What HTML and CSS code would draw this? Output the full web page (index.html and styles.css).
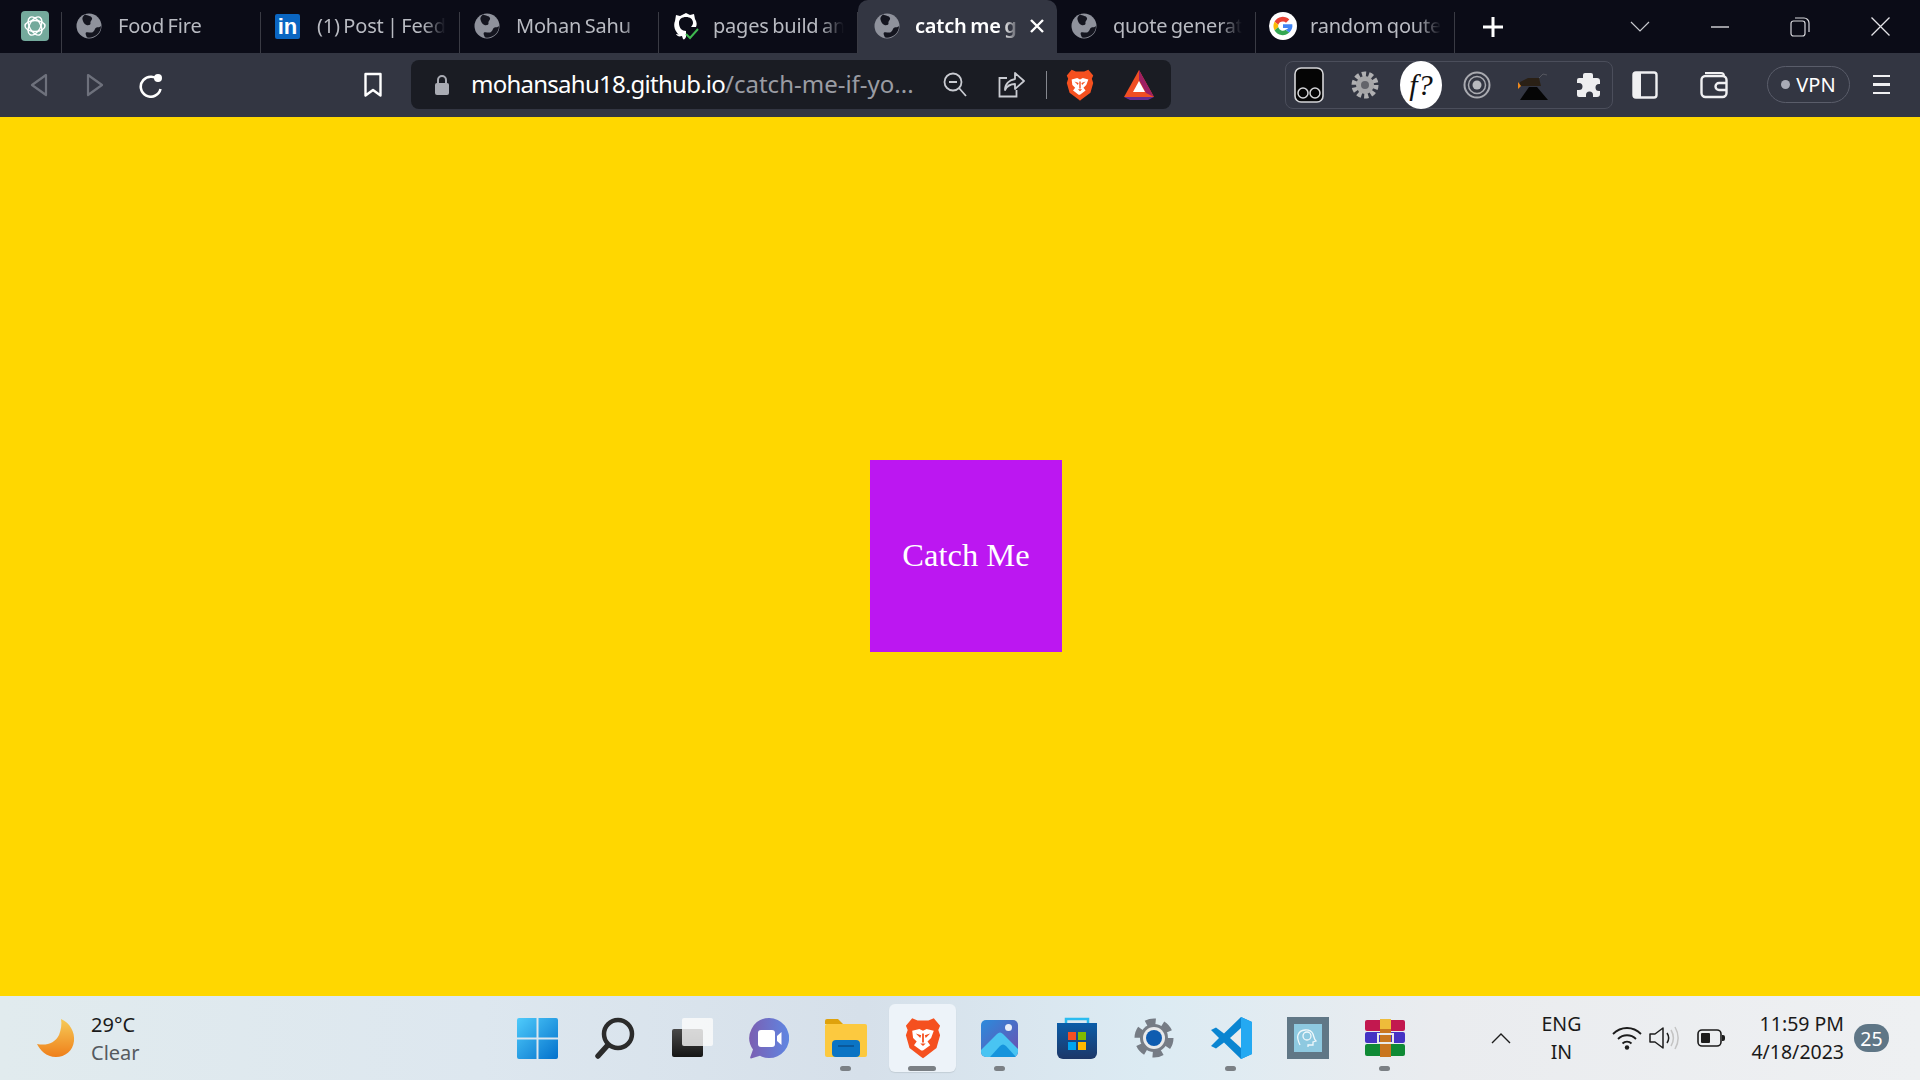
FILE: index.html
```html
<!DOCTYPE html>
<html lang="en">
<head>
    <meta charset="UTF-8" />
    <title>catch me</title>
    <link rel="stylesheet" href="styles.css">
</head>
<body>
    <svg class="sprites" width="0" height="0">
        <symbol id="globe" viewBox="0 0 26 26">
            <circle cx="13" cy="13" r="12.500" fill="#8f929c"/>
            <path d="M9 1.500C12 3 15 2.500 16 5c.6 2-2 3-1.500 5 .4 2-2 2.500-4 2-2-.6-3.500-3-4-5.500C6 5 7 3 9 1.500zM25 13c-1 1.500-3 1-4.500 1.500-2 .8-1.500 3-3.500 4.500-2 1.500-5-.5-7 .5-1 .6 0 3 1 5 7 1 14-4 14-11.500z" fill="#14151f"/>
        </symbol>
        <symbol id="google" viewBox="0 0 28 28">
            <circle cx="14" cy="14" r="14" fill="#fff"/>
            <path d="M14 9.500a4.500 4.500 0 0 1 3 1.200l3.300-3.300A9.500 9.500 0 0 0 5.500 9.700l3.800 3a4.800 4.800 0 0 1 4.700-3.200z" fill="#ea4335"/>
            <path d="M9.300 12.700l-3.800-3a9.500 9.500 0 0 0 0 8.600l3.800-3a4.800 4.800 0 0 1 0-2.600z" fill="#fbbc05"/>
            <path d="M9.300 15.300l-3.800 3a9.500 9.500 0 0 0 14.800 2.300l-3.600-2.800a4.800 4.800 0 0 1-7.400-2.500z" fill="#34a853"/>
            <path d="M23.300 12.300H14v3.800h5.300a4.500 4.500 0 0 1-2.600 1.700l3.600 2.800c2.300-2.100 3.600-5 3-8.300z" fill="#4285f4"/>
        </symbol>
        <symbol id="brave" viewBox="0 0 40 46">
            <path d="M8 1l6 2.500h12L32 1l7 8.500-2 4.500 2 6-4 14-13 10-2 1.500-2-1.500L5 34 1 20l2-6-2-4.500z" fill="#f5501f"/>
            <path d="M8 15l8-2 4 2 4-2 8 2-3 8-4 4 3 4-8 6h-2l-8-6 3-4-4-4z" fill="#fff"/>
            <path d="M12 18l6 2-1 3zM28 18l-6 2 1 3zM17 29h6l-3 3zM19 18h2v10h-2z" fill="#f5501f"/>
        </symbol>
        <symbol id="cog" viewBox="0 0 42 42">
            <circle cx="21" cy="21" r="15" fill="none" stroke="#767c85" stroke-width="9" stroke-dasharray="9 6.700"/>
            <circle cx="21" cy="21" r="14" fill="#767c85"/>
        </symbol>
    </svg>

    <!-- Browser tabs -->
    <div class="tabbar">
        <div class="pinned">
            <svg width="28" height="30" viewBox="0 0 28 30">
                <rect width="28" height="30" rx="4" fill="#74aa9c"/>
                <g fill="none" stroke="#fff" stroke-width="1.400">
                    <ellipse cx="14" cy="15" rx="10" ry="5.500"/>
                    <ellipse cx="14" cy="15" rx="10" ry="5.500" transform="rotate(60 14 15)"/>
                    <ellipse cx="14" cy="15" rx="10" ry="5.500" transform="rotate(120 14 15)"/>
                </g>
            </svg>
        </div>
        <div class="tab">
            <svg class="favicon" width="26" height="26"><use href="#globe"/></svg>
            <span class="title">Food Fire</span>
        </div>
        <div class="tab">
            <svg class="favicon" width="26" height="26" viewBox="0 0 26 26">
                <rect width="25" height="25" y="1" rx="2" fill="#0a66c2"/>
                <text x="12.500" y="21" text-anchor="middle" class="linkedin-text">in</text>
            </svg>
            <span class="title">(1) Post | Feed</span>
        </div>
        <div class="tab">
            <svg class="favicon" width="26" height="26"><use href="#globe"/></svg>
            <span class="title">Mohan Sahu</span>
        </div>
        <div class="tab">
            <svg class="favicon wide" width="28" height="28" viewBox="0 0 28 28">
                <path d="M14 1l4 2 4-1 1 5c2 3 2 6 1 8h-5c1-1 2-3 2-4 0-4-3-6-7-6s-7 2-7 6c0 5 3 8 7 8v6c-1 2-2 3-3 2l-1-3c-3 1-5 0-6-2 1 0 2 0 3 1-4-4-6-9-4-14l1-6 4 1z" fill="#fff"/>
                <path d="M14 22l4 4 8-9" fill="none" stroke="#3fb950" stroke-width="2"/>
            </svg>
            <span class="title">pages build an</span>
        </div>
        <div class="tab active">
            <svg class="favicon" width="26" height="26"><use href="#globe"/></svg>
            <span class="title">catch me g</span>
            <svg class="tab-close" width="14" height="14" viewBox="0 0 14 14">
                <path d="M1 1l12 12M13 1L1 13" stroke="#fff" stroke-width="2.400"/>
            </svg>
        </div>
        <div class="tab">
            <svg class="favicon" width="26" height="26"><use href="#globe"/></svg>
            <span class="title">quote generat</span>
        </div>
        <div class="tab">
            <svg class="favicon wide" width="28" height="28"><use href="#google"/></svg>
            <span class="title">random qoute</span>
        </div>
        <div class="new-tab">
            <svg width="22" height="22" viewBox="0 0 22 22">
                <path d="M11 1v20M1 11h20" stroke="#fff" stroke-width="3"/>
            </svg>
        </div>
        <div class="window-controls">
            <div class="win-btn">
                <svg width="20" height="12" viewBox="0 0 20 12"><path d="M1 1l9 9 9-9" fill="none" stroke="#c8c9cf" stroke-width="1.200"/></svg>
            </div>
            <div class="win-btn">
                <svg width="18" height="2" viewBox="0 0 18 2"><path d="M0 1h18" stroke="#d8d8dc" stroke-width="1.400"/></svg>
            </div>
            <div class="win-btn">
                <svg width="20" height="20" viewBox="0 0 20 20"><rect x="1" y="4" width="14" height="15" rx="2.500" fill="none" stroke="#d8d8dc" stroke-width="1.200"/><path d="M5 1h9a5 5 0 0 1 5 5v9" fill="none" stroke="#d8d8dc" stroke-width="1.200"/></svg>
            </div>
            <div class="win-btn">
                <svg width="19" height="19" viewBox="0 0 19 19"><path d="M.5.500l18 18M18.500.500l-18 18" stroke="#e4e4e8" stroke-width="1.300"/></svg>
            </div>
        </div>
    </div>

    <!-- Browser toolbar -->
    <div class="toolbar">
        <div class="tool-btn">
            <svg width="18" height="24" viewBox="0 0 18 24"><path d="M16 2L2 12l14 10z" fill="none" stroke="#6e717c" stroke-width="2.200" stroke-linejoin="round"/></svg>
        </div>
        <div class="tool-btn">
            <svg width="18" height="24" viewBox="0 0 18 24"><path d="M2 2l14 10L2 22z" fill="none" stroke="#6e717c" stroke-width="2.200" stroke-linejoin="round"/></svg>
        </div>
        <div class="tool-btn">
            <svg width="26" height="26" viewBox="0 0 26 26">
                <path d="M21 9a10 10 0 1 0 1.500 8" fill="none" stroke="#fff" stroke-width="2.600"/>
                <circle cx="20" cy="6" r="4" fill="#fff"/>
            </svg>
        </div>
        <div class="tool-btn bookmark">
            <svg width="20" height="26" viewBox="0 0 20 26"><path d="M2.500 2h15v21.500L10 18l-7.500 5.500z" fill="none" stroke="#fff" stroke-width="2.400" stroke-linejoin="round"/></svg>
        </div>

        <div class="address-bar">
            <svg class="lock" width="16" height="20" viewBox="0 0 16 20">
                <rect x="1" y="8" width="14" height="12" rx="2" fill="#a9abb3"/>
                <path d="M4 8V5a4 4 0 0 1 8 0v3" fill="none" stroke="#a9abb3" stroke-width="2"/>
            </svg>
            <span class="url"><span class="url-host">mohansahu18.github.io</span>/catch-me-if-yo...</span>
            <svg class="bar-icon zoom-out" width="24" height="26" viewBox="0 0 24 26">
                <circle cx="10" cy="10" r="8.500" fill="none" stroke="#c9cbd1" stroke-width="1.800"/>
                <path d="M6 10h8M16 16l7 8" stroke="#c9cbd1" stroke-width="1.800"/>
            </svg>
            <svg class="bar-icon share" width="27" height="26" viewBox="0 0 27 26">
                <path d="M9 6H1.500v18.500h17V18" fill="none" stroke="#c9cbd1" stroke-width="1.800"/>
                <path d="M17 1l9 8-9 8v-5c-5 0-8 2-10 6 0-6 4-10 10-11z" fill="none" stroke="#c9cbd1" stroke-width="1.800" stroke-linejoin="round"/>
            </svg>
            <div class="bar-sep"></div>
            <svg class="bar-icon lion" width="28" height="32"><use href="#brave"/></svg>
            <svg class="bar-icon bat" width="32" height="32" viewBox="0 0 32 32">
                <path d="M16 1L1 28h30z" fill="#f04e23"/>
                <path d="M16 1l15 27-8-4-7-13z" fill="#9e1f63"/>
                <path d="M1 28h30l-6 3H7z" fill="#662d91"/>
                <path d="M16 12l6 11H10z" fill="#fff"/>
            </svg>
        </div>

        <div class="extensions">
            <div class="ext">
                <svg width="30" height="36" viewBox="0 0 30 36">
                    <rect x="1" y="1" width="28" height="34" rx="6" fill="#050505" stroke="#d5d5d8" stroke-width="1.600"/>
                    <circle cx="9" cy="26" r="5" fill="none" stroke="#d5d5d8" stroke-width="1.500"/>
                    <circle cx="21" cy="26" r="5" fill="none" stroke="#d5d5d8" stroke-width="1.500"/>
                </svg>
            </div>
            <div class="ext">
                <svg width="28" height="28" viewBox="0 0 28 28">
                    <circle cx="14" cy="14" r="10.500" fill="none" stroke="#b0b0b2" stroke-width="6" stroke-dasharray="4 2.600"/>
                    <circle cx="14" cy="14" r="9" fill="#a6a6a8"/>
                    <circle cx="14" cy="14" r="4" fill="#63646a"/>
                </svg>
            </div>
            <div class="ext">
                <div class="fquestion">f?</div>
            </div>
            <div class="ext">
                <svg width="28" height="30" viewBox="0 0 28 30">
                    <circle cx="14" cy="15" r="12.500" fill="none" stroke="#a9aab0" stroke-width="2"/>
                    <circle cx="14" cy="15" r="8.500" fill="none" stroke="#a9aab0" stroke-width="1.500"/>
                    <circle cx="14" cy="15" r="4.500" fill="#b8b9be"/>
                </svg>
            </div>
            <div class="ext">
                <svg width="32" height="30" viewBox="0 0 32 30">
                    <path d="M3 12l8-4h11l2 8H3z" fill="#2a2015"/>
                    <path d="M1 12l3 4-3 3z" fill="#f08a1c"/>
                    <path d="M3 30l9-13h8l11 13z" fill="#050505"/>
                    <path d="M22 8l4-4 4 1" fill="none" stroke="#55575f" stroke-width="1"/>
                </svg>
            </div>
            <div class="ext">
                <svg width="28" height="28" viewBox="0 0 28 28">
                    <path d="M10 2h6a2 2 0 0 1 2 2v3h4a3 3 0 0 1 3 3v3h-1a3.500 3.500 0 0 0 0 7h1v3a3 3 0 0 1-3 3h-4v-2a3.500 3.500 0 0 0-7 0v2H4a2 2 0 0 1-2-2v-5h2a3.500 3.500 0 0 0 0-7H2v-3a2 2 0 0 1 2-2h4V4a2 2 0 0 1 2-2z" fill="#eeeef0"/>
                </svg>
            </div>
        </div>

        <div class="tool-btn sidebar-btn">
            <svg width="26" height="28" viewBox="0 0 26 28">
                <rect x="1.500" y="1.500" width="23" height="25" rx="2.500" fill="none" stroke="#f0f0f2" stroke-width="2.400"/>
                <rect x="2" y="2" width="7" height="24" fill="#f0f0f2"/>
            </svg>
        </div>
        <div class="tool-btn wallet-btn">
            <svg width="28" height="28" viewBox="0 0 28 28">
                <path d="M5 2h16a3 3 0 0 1 3 3" fill="none" stroke="#f0f0f2" stroke-width="2"/>
                <rect x="1.500" y="5" width="25" height="21" rx="4" fill="none" stroke="#f0f0f2" stroke-width="2.400"/>
                <path d="M26 12h-7a3.500 3.500 0 0 0 0 7h7" fill="none" stroke="#f0f0f2" stroke-width="2.400"/>
            </svg>
        </div>
        <div class="vpn"><span class="vpn-dot"></span>VPN</div>
        <div class="menu-btn">
            <span></span><span></span><span></span>
        </div>
    </div>

    <!-- Page content -->
    <main class="page">
        <div class="catch-box">Catch Me</div>
    </main>

    <!-- Windows taskbar -->
    <footer class="taskbar">
        <div class="weather">
            <svg width="40" height="40" viewBox="0 0 40 40">
                <defs>
                    <linearGradient id="moon" x1="0" y1="0" x2="0" y2="1">
                        <stop offset="0" stop-color="#f6cb58"/>
                        <stop offset="1" stop-color="#ef7f1a"/>
                    </linearGradient>
                </defs>
                <path d="M25 1c9 4 14 13 13 22-1 10-9 16-18 16C10 39 4 32 1 26c10 2 18-1 22-9 2-5 3-11 2-16z" fill="url(#moon)"/>
            </svg>
            <div class="weather-text">
                <span class="temp">29°C</span>
                <span class="cond">Clear</span>
            </div>
        </div>

        <div class="task-icons">
            <div class="task-icon">
                <svg width="41" height="41" viewBox="0 0 41 41">
                    <defs>
                        <linearGradient id="win" x1="0" y1="0" x2="1" y2="1">
                            <stop offset="0" stop-color="#4fcbfb"/>
                            <stop offset="1" stop-color="#0371cc"/>
                        </linearGradient>
                    </defs>
                    <path d="M2 0h17.500v19.500H0V2a2 2 0 0 1 2-2zM21.500 0H39a2 2 0 0 1 2 2v17.500H21.500zM0 21.500h19.500V41H2a2 2 0 0 1-2-2zM21.500 21.500H41V39a2 2 0 0 1-2 2H21.500z" fill="url(#win)"/>
                </svg>
            </div>
            <div class="task-icon">
                <svg width="40" height="42" viewBox="0 0 40 42">
                    <circle cx="23" cy="17" r="14" fill="none" stroke="#2b2b2b" stroke-width="4.500"/>
                    <path d="M12 29L3 39" stroke="#2b2b2b" stroke-width="5.500" stroke-linecap="round"/>
                </svg>
            </div>
            <div class="task-icon">
                <svg width="42" height="40" viewBox="0 0 42 40">
                    <defs>
                        <linearGradient id="tv" x1="0" y1="0" x2="0" y2="1">
                            <stop offset="0" stop-color="#4a4a4a"/>
                            <stop offset="1" stop-color="#151515"/>
                        </linearGradient>
                    </defs>
                    <rect x="1" y="11" width="31" height="28" rx="2" fill="url(#tv)"/>
                    <rect x="11" y="0" width="31" height="28" rx="2" fill="#fbfbfb" opacity=".8"/>
                </svg>
            </div>
            <div class="task-icon">
                <svg width="40" height="41" viewBox="0 0 40 41">
                    <defs>
                        <linearGradient id="chat" x1="0" y1="0" x2="1" y2="0">
                            <stop offset="0" stop-color="#7b5fb2"/>
                            <stop offset="1" stop-color="#5f86e2"/>
                        </linearGradient>
                    </defs>
                    <path d="M20 0a20 20 0 1 1-9 37.800L2 40.500c-.8 0-1-.8-.7-1.500L4 31.500A20 20 0 0 1 20 0z" fill="url(#chat)"/>
                    <rect x="9" y="12" width="17" height="17" rx="3" fill="#fff"/>
                    <path d="M28 18l4.500-4v13L28 23z" fill="#fff"/>
                </svg>
            </div>
            <div class="task-icon running">
                <svg width="42" height="38" viewBox="0 0 42 38">
                    <path d="M0 2a2 2 0 0 1 2-2h11l5 5h-18z" fill="#dfa20c"/>
                    <rect y="5" width="42" height="33" rx="2" fill="#fcc93f"/>
                    <rect x="7" y="21" width="28" height="17" rx="4" fill="#0b74c4"/>
                    <path d="M13 27h16" stroke="#0b4f8d" stroke-width="1.500"/>
                </svg>
            </div>
            <div class="task-icon running active-app">
                <svg width="36" height="42"><use href="#brave"/></svg>
            </div>
            <div class="task-icon running">
                <svg width="37" height="37" viewBox="0 0 37 37">
                    <defs>
                        <linearGradient id="ph" x1="0" y1="0" x2="1" y2="1">
                            <stop offset="0" stop-color="#2b8bdc"/>
                            <stop offset="1" stop-color="#6c4fb0"/>
                        </linearGradient>
                    </defs>
                    <rect width="37" height="37" rx="5" fill="url(#ph)"/>
                    <circle cx="27.500" cy="7.500" r="3.500" fill="#e8eef8"/>
                    <path d="M0 30l16-16c2-2 4-2 6 0l15 15v3a5 5 0 0 1-5 5H5a5 5 0 0 1-5-5z" fill="#49c4f2"/>
                    <path d="M9 37l10-11c2-2 4-2 6 0l10 11z" fill="#1694dc"/>
                </svg>
            </div>
            <div class="task-icon">
                <svg width="40" height="42" viewBox="0 0 40 42">
                    <defs>
                        <linearGradient id="store" x1="0" y1="0" x2="0" y2="1">
                            <stop offset="0" stop-color="#0b5da8"/>
                            <stop offset="1" stop-color="#1d3768"/>
                        </linearGradient>
                    </defs>
                    <path d="M9 8V2h22v6" fill="none" stroke="#2bbcf0" stroke-width="2.500"/>
                    <path d="M0 6h40v30a6 6 0 0 1-6 6H6a6 6 0 0 1-6-6z" fill="url(#store)"/>
                    <rect x="11" y="15" width="8" height="8" fill="#f25022"/>
                    <rect x="21" y="15" width="8" height="8" fill="#7fba00"/>
                    <rect x="11" y="25" width="8" height="8" fill="#00a4ef"/>
                    <rect x="21" y="25" width="8" height="8" fill="#ffb900"/>
                </svg>
            </div>
            <div class="task-icon">
                <svg width="42" height="42" viewBox="0 0 42 42">
                    <use href="#cog"/>
                    <circle cx="21" cy="21" r="11" fill="#e8e9ea"/>
                    <circle cx="21" cy="21" r="8" fill="#0f5cb0"/>
                </svg>
            </div>
            <div class="task-icon running">
                <svg width="42" height="42" viewBox="0 0 42 42">
                    <path d="M31 0l11 5v32l-11 5-17-16.500-8 6L1 29l8-8-8-8 5-2.500 8 6z" fill="#0a85d1"/>
                    <path d="M31 0l11 5v32l-11 5z" fill="#24a9f2"/>
                    <path d="M31 11v20l-11-10z" fill="#e9ecee"/>
                </svg>
            </div>
            <div class="task-icon">
                <svg width="42" height="42" viewBox="0 0 42 42">
                    <rect width="42" height="42" fill="#607786"/>
                    <rect x="7" y="7" width="28" height="28" fill="#8ec9e0"/>
                    <path d="M13 28c-2-4-3-7-2-10 2-6 12-7 15-1 1 3 1 5 3 7l-3 1v3h-5v2" fill="none" stroke="#f0f8fb" stroke-width="1.300"/>
                    <circle cx="20" cy="19" r="4" fill="none" stroke="#f0f8fb" stroke-width="1.300"/>
                </svg>
            </div>
            <div class="task-icon running">
                <svg width="40" height="38" viewBox="0 0 40 38">
                    <rect y="1" width="40" height="11" rx="2" fill="#c2184f"/>
                    <rect y="13" width="40" height="11" rx="2" fill="#4533c4"/>
                    <rect y="25" width="40" height="12" rx="2" fill="#0f8a35"/>
                    <rect x="15" y="0" width="11" height="38" fill="#c9761f"/>
                    <rect x="15" y="0" width="11" height="10" fill="#eebc3a"/>
                    <rect x="13" y="15" width="15" height="9" fill="none" stroke="#e9e9e9" stroke-width="2"/>
                </svg>
            </div>
        </div>

        <div class="tray">
            <svg class="tray-chevron" width="20" height="11" viewBox="0 0 20 11"><path d="M1 10l9-9 9 9" fill="none" stroke="#1c1c1c" stroke-width="1.400"/></svg>
            <div class="lang"><span>ENG</span><span>IN</span></div>
            <svg class="tray-wifi" width="30" height="24" viewBox="0 0 30 24">
                <g fill="none" stroke="#1c1c1c" stroke-width="1.800">
                    <path d="M1 8c8-8 20-8 28 0"/>
                    <path d="M6 13c5-5 13-5 18 0"/>
                    <path d="M10.500 17.500c2.500-2.500 6.500-2.500 9 0"/>
                </g>
                <circle cx="15" cy="21.500" r="2.200" fill="#1c1c1c"/>
            </svg>
            <svg class="tray-sound" width="30" height="24" viewBox="0 0 30 24">
                <path d="M1 8h5l8-6v20l-8-6H1z" fill="none" stroke="#1c1c1c" stroke-width="1.500" stroke-linejoin="round"/>
                <path d="M18 7c2 3 2 7 0 10" fill="none" stroke="#1c1c1c" stroke-width="1.500"/>
                <path d="M22 4c3 5 3 11 0 16M26 1c4 7 4 15 0 22" fill="none" stroke="#c4c4c4" stroke-width="1.500"/>
            </svg>
            <svg class="tray-battery" width="28" height="18" viewBox="0 0 28 18">
                <rect x="1" y="1" width="23" height="16" rx="4" fill="none" stroke="#1c1c1c" stroke-width="1.600"/>
                <rect x="4" y="4" width="9" height="10" rx="1" fill="#1c1c1c"/>
                <path d="M25 6h1a2 2 0 0 1 2 2v2a2 2 0 0 1-2 2h-1z" fill="#1c1c1c"/>
            </svg>
            <div class="clock"><span>11:59 PM</span><span>4/18/2023</span></div>
            <div class="notif">25</div>
        </div>
    </footer>
</body>
</html>
```

FILE: styles.css
```css
* {
    box-sizing: border-box;
}

body {
    margin: 0;
    height: 100vh;
    display: flex;
    flex-direction: column;
    overflow: hidden;
    font-family: "Noto Sans", "Open Sans", sans-serif;
    background: #ffd700;
}

svg {
    display: block;
    flex-shrink: 0;
}

.sprites {
    position: absolute;
}

/* Tab strip */
.tabbar {
    height: 53px;
    display: flex;
    background: #0b0c17;
    color: #b9bbc2;
    font-size: 20px;
}

.pinned {
    width: 62px;
    padding-left: 21px;
    padding-top: 11px;
    position: relative;
}

.pinned::after,
.tab::after {
    content: "";
    position: absolute;
    right: 0;
    top: 12px;
    bottom: 0;
    width: 1px;
    background: #3a3b44;
}

.tab {
    position: relative;
    width: 199px;
    height: 53px;
    padding: 0 14px 2px 14px;
    display: flex;
    align-items: center;
    gap: 16px;
}

.title {
    flex: 1;
    white-space: nowrap;
    overflow: hidden;
    letter-spacing: -0.2px;
    word-spacing: -1.5px;
    -webkit-mask-image: linear-gradient(to right, #000 82%, transparent 100%);
    mask-image: linear-gradient(to right, #000 82%, transparent 100%);
}

.favicon.wide {
    margin: 0 -3px 0 -1px;
}

.linkedin-text {
    fill: #fff;
    font: bold 22px "Liberation Sans", sans-serif;
}

.tab.active {
    background: #333642;
    border-radius: 10px 10px 0 0;
    color: #fff;
    font-weight: 600;
    padding: 0 13px 2px 16px;
    gap: 15px;
}

.tab.active::after {
    display: none;
}

.tab-close {
    margin-left: -6px;
}

.new-tab {
    width: 76px;
    display: flex;
    align-items: center;
    justify-content: center;
}

.window-controls {
    margin-left: auto;
    display: flex;
}

.win-btn {
    width: 80px;
    display: flex;
    align-items: center;
    justify-content: center;
}

/* Toolbar */
.toolbar {
    height: 64px;
    padding: 0 0 1px 11px;
    display: flex;
    align-items: center;
    background: #333642;
}

.tool-btn {
    width: 56px;
    display: flex;
    justify-content: center;
}

.bookmark {
    margin-left: 166px;
}

.address-bar {
    width: 760px;
    height: 49px;
    margin-left: 10px;
    padding-left: 23px;
    display: flex;
    align-items: center;
    background: #1a1c23;
    border-radius: 8px;
}

.url {
    margin-left: 21px;
    padding-bottom: 2px;
    width: 442px;
    white-space: nowrap;
    font-size: 24px;
    color: #9a9ca3;
}

.url-host {
    color: #fff;
    letter-spacing: -0.75px;
}

.zoom-out {
    margin-left: 30px;
}

.share {
    margin-left: 31px;
}

.bar-sep {
    width: 1px;
    height: 28px;
    margin-left: 21px;
    background: #85878e;
}

.lion {
    margin-left: 19px;
}

.bat {
    margin-left: 29px;
}

.extensions {
    width: 328px;
    height: 48px;
    margin-left: 114px;
    display: flex;
    align-items: center;
    justify-content: center;
    border: 1px solid #4b4e5b;
    border-radius: 8px;
}

.ext {
    flex: none;
    width: 56px;
    display: flex;
    justify-content: center;
}

.fquestion {
    width: 42px;
    height: 48px;
    border-radius: 50%;
    background: #fff;
    color: #111;
    text-align: center;
    font: italic 30px/48px "Liberation Serif", serif;
}

.sidebar-btn {
    margin-left: 4px;
}

.wallet-btn {
    margin-left: 13px;
}

.vpn {
    width: 83px;
    height: 37px;
    margin-left: 25px;
    display: flex;
    align-items: center;
    justify-content: center;
    gap: 6px;
    border: 1.500px solid #5a5d6a;
    border-radius: 19px;
    color: #fff;
    font-size: 20px;
}

.vpn-dot {
    width: 9px;
    height: 9px;
    border-radius: 50%;
    background: #a9abb6;
}

.menu-btn {
    width: 17px;
    margin-left: 23px;
    display: flex;
    flex-direction: column;
    gap: 6px;
}

.menu-btn span {
    height: 2.500px;
    background: #f0f0f2;
}

/* Page */
.page {
    flex: 1;
    display: flex;
    align-items: center;
    justify-content: center;
    background: #ffd700;
}

.catch-box {
    width: 192px;
    height: 192px;
    margin-left: 12px;
    margin-top: -2px;
    display: flex;
    align-items: center;
    justify-content: center;
    background: #bc17f1;
    color: #fff;
    font-family: "Liberation Serif", serif;
    font-size: 32.500px;
}

/* Taskbar */
.taskbar {
    height: 84px;
    display: grid;
    grid-template-columns: 1fr auto 1fr;
    align-items: center;
    background: linear-gradient(to right, #e1ebee 0%, #dde7ef 25%, #d6e0ea 45%, #dcebf3 60%, #eaecef 75%, #eef0f2 100%);
    color: #1a1a1a;
}

.weather {
    padding-left: 36px;
    display: flex;
    align-items: center;
    gap: 15px;
}

.weather-text {
    display: flex;
    flex-direction: column;
    padding-top: 2px;
    font-size: 20px;
    line-height: 28px;
}

.cond {
    color: #555a5f;
}

.task-icons {
    margin-left: 2px;
    display: flex;
}

.task-icon {
    position: relative;
    width: 77px;
    height: 84px;
    display: flex;
    align-items: center;
    justify-content: center;
}

.task-icon.running::after {
    content: "";
    position: absolute;
    left: 33px;
    bottom: 9px;
    width: 11px;
    height: 5px;
    border-radius: 3px;
    background: #7b8085;
}

.active-app::before {
    content: "";
    position: absolute;
    left: 5px;
    right: 5px;
    top: 8px;
    bottom: 8px;
    border-radius: 6px;
    background: #edf3f9;
    box-shadow: 0 1px 1px #c3ced6;
}

.active-app svg {
    position: relative;
}

.task-icon.active-app::after {
    left: 24px;
    width: 28px;
}

.tray {
    display: flex;
    align-items: center;
    justify-content: flex-end;
    font-size: 19.500px;
}

.tray-chevron {
    margin-right: 18px;
}

.lang {
    width: 64px;
    margin-right: 19px;
    display: flex;
    flex-direction: column;
    align-items: center;
    line-height: 28px;
}

.tray-wifi {
    margin-right: 7px;
}

.tray-sound {
    margin-right: 18px;
}

.tray-battery {
    margin-right: 26px;
}

.clock {
    display: flex;
    flex-direction: column;
    align-items: flex-end;
    line-height: 28px;
}

.notif {
    width: 35px;
    height: 28px;
    margin: 0 31px 0 10px;
    display: flex;
    align-items: center;
    justify-content: center;
    border-radius: 14px;
    background: #5f7686;
    color: #fff;
}
```
